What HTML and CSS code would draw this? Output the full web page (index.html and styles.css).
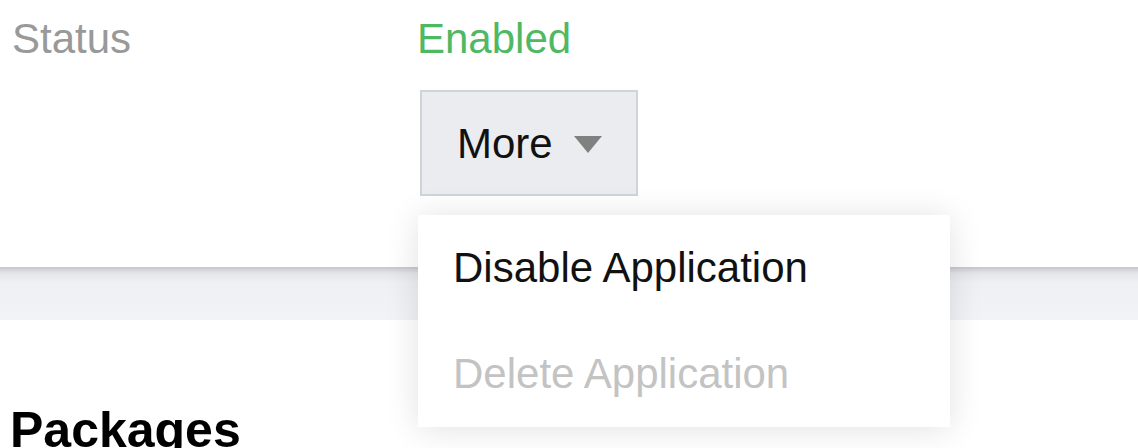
FILE: index.html
```html
<!DOCTYPE html>
<html>
<head>
    <title>Application</title>
    <link rel="stylesheet" href="styles.css">
</head>
<body>
    <div class="detail">
        <div class="label">Status</div>
        <div class="value">
            <div class="status-on">Enabled</div>
            <div class="dropdown">
                <button class="more-btn">More <span class="caret"></span></button>
                <ul class="menu">
                    <li class="menu-item">Disable Application</li>
                    <li class="menu-item disabled">Delete Application</li>
                </ul>
            </div>
        </div>
    </div>

    <div class="divider"></div>

    <h2 class="section-title">Packages</h2>
</body>
</html>
```

FILE: styles.css
```css
body {
    font-family: "Liberation Sans", Arial, sans-serif;
    margin: 0;
    background: #fff;
    color: #000;
}
.detail {
    display: grid;
    grid-template-columns: 405px 1fr;
    padding: 14px 0 0 12px;
    font-size: 42px;
    line-height: 50px;
}
.label {
    color: #999;
}
.status-on {
    color: #4fb862;
}
.dropdown {
    position: relative;
    margin: 26px 0 0 3px;
}
.more-btn {
    display: inline-flex;
    align-items: center;
    gap: 21px;
    box-sizing: border-box;
    width: 218px;
    height: 106px;
    padding: 27px 0 25px 35px;
    font: inherit;
    color: #111;
    background: #ebecf0;
    border: 2px solid #cfd3da;
    cursor: pointer;
}
.caret {
    width: 0;
    height: 0;
    border-left: 14px solid transparent;
    border-right: 14px solid transparent;
    border-top: 17px solid #808080;
}
.menu {
    position: absolute;
    top: 125px;
    left: -2px;
    z-index: 2;
    width: 532px;
    margin: 0;
    padding: 0;
    list-style: none;
    background: #fff;
    box-shadow: 0 2px 32px rgba(0, 0, 0, 0.12);
}
.menu-item {
    padding: 28px 0 28px 35px;
    color: #111;
}
.menu-item.disabled {
    color: #c3c3c3;
}
.divider {
    height: 53px;
    margin-top: 71px;
    background: linear-gradient(#c4c6cc, #e4e5ea 6px, #eff0f4 16px, #f2f3f6);
}
.section-title {
    margin: 80px 0 0;
    padding-left: 10px;
    font-size: 50px;
    line-height: 60px;
    font-weight: bold;
}
```
